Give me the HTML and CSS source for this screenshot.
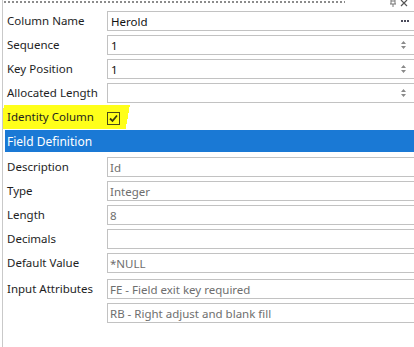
FILE: index.html
```html
<!DOCTYPE html>
<html>
<head>
<meta charset="utf-8">
<link rel="stylesheet" href="styles.css">
</head>
<body>
<div class="panel">
  <div class="topbar">
    <div class="dots"></div>
    <div class="win-icons">
      <svg width="8" height="7" viewBox="0 0 8 7"><path d="M2 0v4M6 0v4M1 4h6M4 4v3M2 1h4" stroke="#777" stroke-width="1" fill="none"/></svg>
      <svg width="8" height="7" viewBox="0 0 8 7"><path d="M1 0l6 6M7 0l-6 6" stroke="#555" stroke-width="1.2" fill="none"/></svg>
    </div>
  </div>
  <div class="row"><div class="label">Column Name</div><div class="field">Herold<span class="ellipsis"><svg width="8" height="2" viewBox="0 0 8 2"><path d="M0 0h2v2H0zM3 0h2v2H3zM6 0h2v2H6z" fill="#4a4a5a"/></svg></span></div></div>
  <div class="row"><div class="label">Sequence</div><div class="field">1<span class="spin"><svg width="7" height="10" viewBox="0 0 7 10"><path d="M3.5 1L6 4H1z M1 6h5L3.5 9z" fill="#8a8a8a"/></svg></span></div></div>
  <div class="row"><div class="label">Key Position</div><div class="field">1<span class="spin"><svg width="7" height="10" viewBox="0 0 7 10"><path d="M3.5 1L6 4H1z M1 6h5L3.5 9z" fill="#8a8a8a"/></svg></span></div></div>
  <div class="row"><div class="label">Allocated Length</div><div class="field"><span class="spin"><svg width="7" height="10" viewBox="0 0 7 10"><path d="M3.5 1L6 4H1z M1 6h5L3.5 9z" fill="#8a8a8a"/></svg></span></div></div>
  <div class="row highlight"><div class="label">Identity Column</div><div class="check"><svg width="11" height="11" viewBox="0 0 11 11"><path d="M2 5.5l2.5 2.5L9 2.5" stroke="#3a3a10" stroke-width="1.8" fill="none"/></svg></div></div>
  <div class="section">Field Definition</div>
  <div class="group">
    <div class="row"><div class="label">Description</div><div class="field dis">Id</div></div>
    <div class="row"><div class="label">Type</div><div class="field dis">Integer</div></div>
    <div class="row"><div class="label">Length</div><div class="field dis">8</div></div>
    <div class="row"><div class="label">Decimals</div><div class="field dis"></div></div>
    <div class="row"><div class="label">Default Value</div><div class="field dis">*NULL</div></div>
    <div class="row attrs"><div class="label">Input Attributes</div><div class="field dis">FE - Field exit key required</div></div>
    <div class="row"><div class="label"></div><div class="field dis">RB - Right adjust and blank fill</div></div>
  </div>
</div>
</body>
</html>
```
FILE: styles.css
```css
html, body {
  margin: 0;
  padding: 0;
  background: #fff;
}
body {
  width: 414px;
  height: 347px;
  overflow: hidden;
  font-family: "Noto Sans", "Open Sans", sans-serif;
  font-size: 11.5px;
  color: #1e1e1e;
}
.panel {
  margin-left: 2px;
  border-left: 1px solid #c9c9c9;
  height: 347px;
  overflow: hidden;
}
.topbar {
  height: 9px;
  display: flex;
  align-items: flex-start;
}
.dots {
  margin-left: 1px;
  margin-top: 1px;
  width: 341px;
  height: 2px;
  background: repeating-linear-gradient(to right, #8c8c8c 0 2px, transparent 2px 4px);
}
.win-icons {
  margin-left: 44px;
  display: flex;
  gap: 3px;
}
.row {
  height: 24px;
  display: flex;
  align-items: center;
}
.label {
  width: 100px;
  padding-left: 4px;
  flex: none;
  white-space: nowrap;
  line-height: 16px;
}
.field {
  flex: 1;
  height: 18px;
  border: 1px solid #c2c2c2;
  border-right: none;
  margin-right: -4px;
  padding-left: 3px;
  display: flex;
  align-items: center;
  position: relative;
  white-space: nowrap;
  color: #111;
}
.field.dis {
  color: #6e6e6e;
  padding-left: 2px;
}
.ellipsis {
  margin-left: auto;
  margin-right: 9px;
  display: flex;
}
.spin {
  margin-left: auto;
  margin-right: 11px;
  display: flex;
}
.highlight {
  background: linear-gradient(100deg, transparent 0 1px, #ffff1a 1px 125px, transparent 125px);
}
.check {
  width: 11px;
  height: 11px;
  border: 1px solid #4a4a18;
  margin-top: 3px;
  display: flex;
}
.section {
  margin-top: 1px;
  margin-left: 2px;
  height: 22px;
  background: #1a79d5;
  color: #fff;
  padding-left: 2px;
  display: flex;
  align-items: center;
  font-size: 12px;
}
.group {
  margin-top: 3px;
}
.attrs {
  margin-top: 2px;
}
```
